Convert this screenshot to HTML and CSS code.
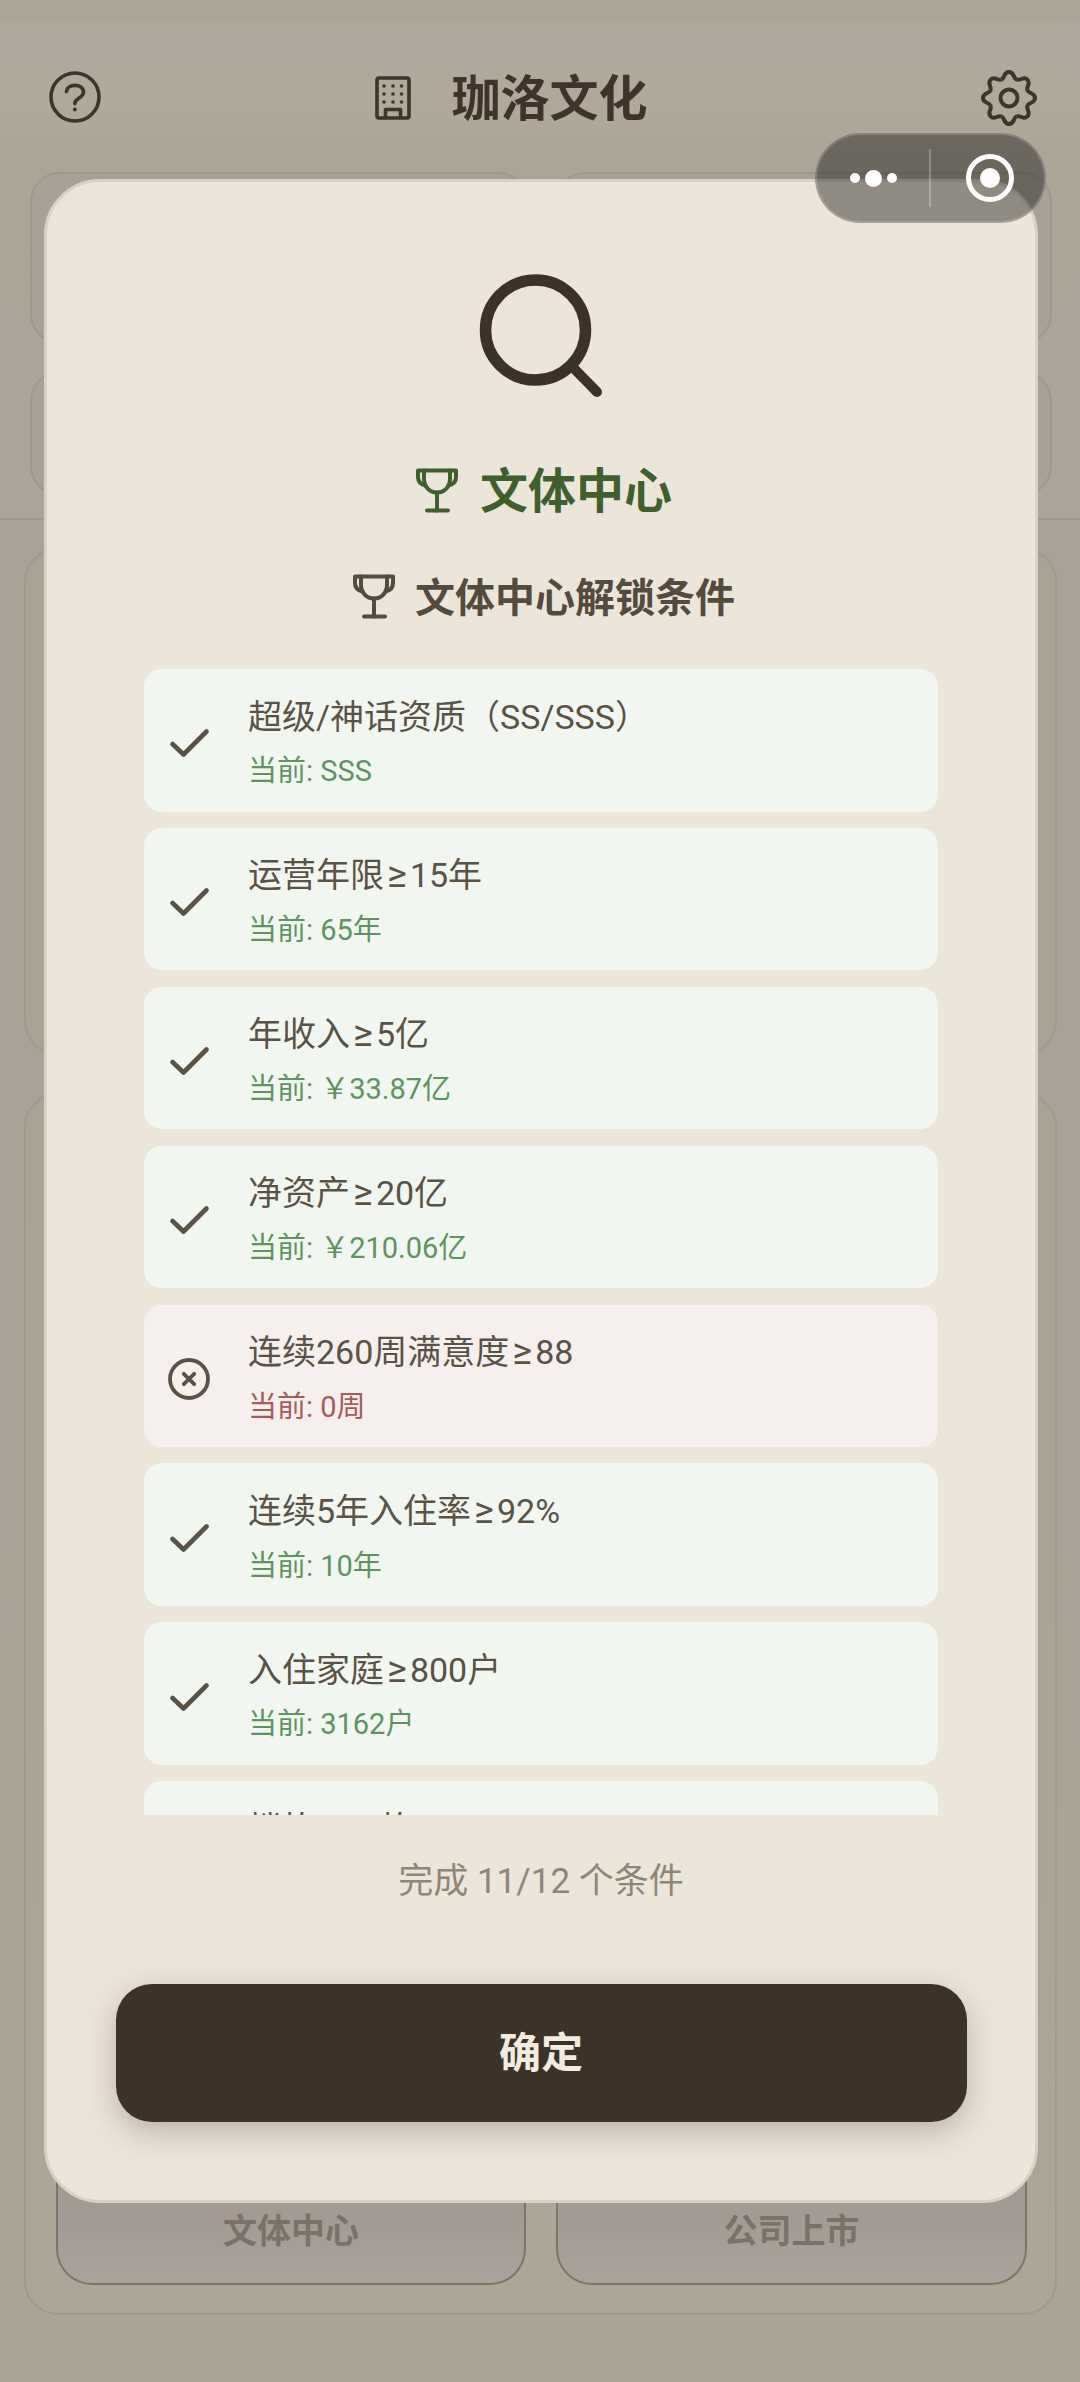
FILE: index.html
```html
<!DOCTYPE html>
<html lang="zh-CN">
<head>
<meta charset="utf-8">
<title>珈洛文化</title>
<link rel="stylesheet" href="styles.css">
</head>
<body>
<svg class="defs" width="0" height="0" aria-hidden="true">
  <defs>
    <g id="trophy" fill="none" stroke="currentColor" stroke-width="4" stroke-linecap="round" stroke-linejoin="round">
      <path d="M8 2.5H34V11C34 18.5 28.5 24.5 21 24.5S8 18.5 8 11Z"/>
      <path d="M8 2.5H2V9C2 13.5 5 16.5 9.5 17.5"/>
      <path d="M34 2.5H40V9C40 13.5 37 16.5 32.5 17.5"/>
      <path d="M21 24.5V42.5"/>
      <path d="M11 42.5H32"/>
    </g>
    <path id="check" d="M8.5 29L19.5 39.5L42.5 16.5" fill="none" stroke="#5b5246" stroke-width="4.6" stroke-linecap="round" stroke-linejoin="round"/>
    <path id="tooth" d="M-7.65 -18.48C-3.8 -20 -5.5 -26 0 -26S3.8 -20 7.65 -18.48"/>
  </defs>
</svg>

<div class="page">
  <div class="status-strip"></div>
  <div class="top-block">
    <header class="app-header">
      <svg class="ico-help" width="52" height="52" viewBox="0 0 52 52" fill="none" stroke="#3e342a" stroke-width="3.6" stroke-linecap="round">
        <circle cx="26" cy="26" r="24"/>
        <path d="M17.5 20.5C18 12.5 34 12 34.5 21C34.5 27 26.2 27 25.8 32.5"/>
        <circle cx="25.8" cy="38.5" r="2" fill="#3e342a" stroke="none"/>
      </svg>
      <div class="brand">
        <svg class="ico-building" width="36" height="44" viewBox="0 0 36 44" fill="none" stroke="#3e342a" stroke-width="3.6" stroke-linejoin="round">
          <rect x="2" y="2" width="32" height="40" rx="2"/>
          <path d="M10.5 42V33.5H25.5V42"/>
          <g fill="#3e342a" stroke="none">
            <circle cx="9" cy="10" r="1.8"/><circle cx="18" cy="10" r="1.8"/><circle cx="26.5" cy="10" r="1.8"/>
            <circle cx="9" cy="18" r="1.8"/><circle cx="18" cy="18" r="1.8"/><circle cx="26.5" cy="18" r="1.8"/>
            <circle cx="9" cy="26" r="1.8"/><circle cx="18" cy="26" r="1.8"/><circle cx="26.5" cy="26" r="1.8"/>
          </g>
        </svg>
        <h1 class="brand-name">珈洛文化</h1>
      </div>
      <svg class="ico-gear" width="60" height="60" viewBox="-30 -30 60 60" fill="none" stroke="#3e342a" stroke-width="4" stroke-linejoin="round">
        <use href="#tooth"/>
        <use href="#tooth" transform="rotate(45)"/>
        <use href="#tooth" transform="rotate(90)"/>
        <use href="#tooth" transform="rotate(135)"/>
        <use href="#tooth" transform="rotate(180)"/>
        <use href="#tooth" transform="rotate(225)"/>
        <use href="#tooth" transform="rotate(270)"/>
        <use href="#tooth" transform="rotate(315)"/>
        <circle r="8.5"/>
      </svg>
    </header>
    <div class="stat-grid">
      <div class="stat-card stat-tall"></div>
      <div class="stat-card stat-tall"></div>
      <div class="stat-card stat-short"></div>
      <div class="stat-card stat-short"></div>
    </div>
  </div>
  <section class="panel panel-one"></section>
  <section class="panel panel-two">
    <div class="action-grid">
      <div class="action-btn">文体中心</div>
      <div class="action-btn">公司上市</div>
    </div>
  </section>
</div>

<div class="capsule">
  <div class="capsule-dots"><i class="dot"></i><i class="dot dot-big"></i><i class="dot"></i></div>
  <i class="capsule-line"></i>
  <div class="capsule-ring"><i></i></div>
</div>

<main class="modal">
  <svg class="ico-search" width="130" height="130" viewBox="0 0 130 130" fill="none" stroke="#3c3228" stroke-linecap="round">
    <circle cx="59.5" cy="60" r="50" stroke-width="11.5"/>
    <path d="M96 96.5L121 122" stroke-width="10"/>
  </svg>
  <div class="modal-title">
    <svg class="ico-trophy" width="42" height="45" viewBox="0 0 42 45"><use href="#trophy"/></svg>
    <h2 class="modal-name">文体中心</h2>
  </div>
  <div class="modal-sub">
    <svg class="ico-trophy" width="42" height="45" viewBox="0 0 42 45"><use href="#trophy"/></svg>
    <h3 class="modal-subname">文体中心解锁条件</h3>
  </div>
  <div class="cond-list">
    <div class="cond cond-ok">
      <svg class="cond-ico" width="50" height="50" viewBox="0 0 50 50"><use href="#check"/></svg>
      <div class="cond-body"><div class="cond-title">超级/神话资质（SS/SSS）</div><div class="cond-now">当前: SSS</div></div>
    </div>
    <div class="cond cond-ok">
      <svg class="cond-ico" width="50" height="50" viewBox="0 0 50 50"><use href="#check"/></svg>
      <div class="cond-body"><div class="cond-title">运营年限<span class="ge">≥</span>15年</div><div class="cond-now">当前: 65年</div></div>
    </div>
    <div class="cond cond-ok">
      <svg class="cond-ico" width="50" height="50" viewBox="0 0 50 50"><use href="#check"/></svg>
      <div class="cond-body"><div class="cond-title">年收入<span class="ge">≥</span>5亿</div><div class="cond-now">当前: ￥33.87亿</div></div>
    </div>
    <div class="cond cond-ok">
      <svg class="cond-ico" width="50" height="50" viewBox="0 0 50 50"><use href="#check"/></svg>
      <div class="cond-body"><div class="cond-title">净资产<span class="ge">≥</span>20亿</div><div class="cond-now">当前: ￥210.06亿</div></div>
    </div>
    <div class="cond cond-bad">
      <svg class="cond-ico" width="50" height="50" viewBox="0 0 50 50" fill="none" stroke="#5b5246" stroke-width="3.8" stroke-linecap="round">
        <circle cx="25" cy="28" r="19"/>
        <path d="M19.8 22.8L30.2 33.2M30.2 22.8L19.8 33.2"/>
      </svg>
      <div class="cond-body"><div class="cond-title">连续260周满意度<span class="ge">≥</span>88</div><div class="cond-now">当前: 0周</div></div>
    </div>
    <div class="cond cond-ok">
      <svg class="cond-ico" width="50" height="50" viewBox="0 0 50 50"><use href="#check"/></svg>
      <div class="cond-body"><div class="cond-title">连续5年入住率<span class="ge">≥</span>92%</div><div class="cond-now">当前: 10年</div></div>
    </div>
    <div class="cond cond-ok">
      <svg class="cond-ico" width="50" height="50" viewBox="0 0 50 50"><use href="#check"/></svg>
      <div class="cond-body"><div class="cond-title">入住家庭<span class="ge">≥</span>800户</div><div class="cond-now">当前: 3162户</div></div>
    </div>
    <div class="cond cond-ok">
      <svg class="cond-ico" width="50" height="50" viewBox="0 0 50 50"><use href="#check"/></svg>
      <div class="cond-body"><div class="cond-title">楼栋<span class="ge">≥</span>30栋</div><div class="cond-now">当前: 42栋</div></div>
    </div>
  </div>
  <p class="cond-count">完成 11/12 个条件</p>
  <button class="confirm" type="button">确定</button>
</main>
</body>
</html>
```
FILE: styles.css
```css
* { box-sizing: border-box; }
html, body { margin: 0; padding: 0; }
body {
  position: relative;
  width: 1080px;
  height: 2382px;
  overflow: hidden;
  font-family: Roboto, "Noto Sans CJK SC", sans-serif;
  background: #aba497;
}
.defs { position: absolute; }

/* dimmed page behind the dialog */
.page {
  width: 1080px;
  height: 2382px;
  display: flex;
  flex-direction: column;
  background: linear-gradient(180deg, #a9a296 520px, #a9a296 1000px, #aba497 2300px, #aaa396 100%);
}
.status-strip { height: 23px; background: #aba497; }
.top-block {
  height: 497px;
  padding: 0 28px 0 30px;
  border-bottom: 2px solid #9f998c;
  background: linear-gradient(180deg, #b0a99d 0, #afa89b 90px, #aba497 140px, #aca69a 400px);
}
.app-header {
  height: 149px;
  display: flex;
  align-items: center;
  justify-content: space-between;
  padding: 0 0 0 19px;
  position: relative;
}
.ico-help { margin-top: -1px; }
.ico-gear { margin-right: 13px; }
.brand {
  display: flex;
  align-items: center;
  gap: 40px;
  margin-right: 57px;
}
.brand-name {
  margin: 4px 0 0;
  font-size: 49px;
  line-height: 60px;
  font-weight: 700;
  color: #3e342a;
}
.stat-grid {
  display: grid;
  grid-template-columns: 498px 497px;
  grid-template-rows: 172px 125px;
  gap: 27px 27px;
}
.stat-card {
  background: #a8a296;
  border: 2px solid #9e988b;
  border-radius: 30px;
}
.panel {
  margin: 28px 23px 0 24px;
  background: #a9a396;
  border: 2px solid #a09a8d;
  border-radius: 34px;
}
.panel-one { height: 507px; }
.panel-two {
  margin-top: 38px;
  height: 1222px;
  display: flex;
  flex-direction: column;
  justify-content: flex-end;
  padding: 0 28px 28px 30px;
  background: linear-gradient(180deg, #a9a396 0, #aca598 100%);
}
.action-grid {
  display: grid;
  grid-template-columns: 470px 471px;
  gap: 30px;
}
.action-btn {
  height: 106px;
  display: flex;
  align-items: center;
  justify-content: center;
  font-size: 34px;
  line-height: 50px;
  font-weight: 700;
  color: #7a7268;
  background: linear-gradient(180deg, #a39b93 0, #a39b93 40%, #a8a39b 100%);
  border: 2px solid #7b7568;
  border-top: 0;
  border-radius: 0 0 36px 36px;
}

/* mini-program capsule */
.capsule {
  position: absolute;
  z-index: 3;
  left: 815px;
  top: 133px;
  width: 231px;
  height: 90px;
  display: flex;
  align-items: center;
  background: rgba(30, 28, 25, 0.45);
  border: 2px solid rgba(255, 255, 255, 0.18);
  border-radius: 45px;
}
.capsule-dots {
  width: 112px;
  display: flex;
  align-items: center;
  justify-content: center;
  gap: 5px;
}
.dot { width: 10px; height: 10px; border-radius: 50%; background: #fff; }
.dot-big { width: 17px; height: 17px; }
.capsule-line { width: 2px; height: 58px; background: rgba(255, 255, 255, 0.25); }
.capsule-ring {
  width: 48px;
  height: 48px;
  margin-left: 35px;
  border: 5px solid #fff;
  border-radius: 50%;
  display: flex;
  align-items: center;
  justify-content: center;
}
.capsule-ring i { width: 20px; height: 20px; border-radius: 50%; background: #fff; }

/* dialog */
.modal {
  position: absolute;
  z-index: 2;
  left: 44px;
  top: 179px;
  width: 994px;
  height: 2024px;
  display: flex;
  flex-direction: column;
  align-items: center;
  padding-top: 88px;
  background: #ece5d9;
  border: 3px solid #d8d2c4;
  border-radius: 56px;
}
.ico-search { flex: none; }
.modal-title {
  display: flex;
  align-items: center;
  gap: 22px;
  margin: 70px 0 0 6px;
  height: 44px;
  color: #3f5f2d;
}
.modal-title .ico-trophy { margin-top: -4px; }
.modal-name {
  margin: 0;
  font-size: 48px;
  line-height: 60px;
  font-weight: 700;
}
.modal-sub {
  display: flex;
  align-items: center;
  gap: 20px;
  margin: 63px 0 0 6px;
  height: 44px;
  color: #544a3e;
}
.modal-sub .ico-trophy { margin-top: -6px; }
.modal-subname {
  margin: 0;
  font-size: 40px;
  line-height: 52px;
  font-weight: 700;
}
.cond-list {
  flex: none;
  width: 794px;
  height: 1146px;
  margin-top: 48px;
  overflow: hidden;
  display: flex;
  flex-direction: column;
  gap: 16.3px;
}
.cond {
  flex: none;
  display: flex;
  align-items: center;
  gap: 34px;
  height: 142.6px;
  padding-left: 20px;
  border-radius: 18px;
}
.cond-ok { background: #f1f7f0; }
.cond-bad { background: #f5efee; }
.cond-title {
  font-size: 34px;
  line-height: 48px;
  color: #5b5246;
}
.ge {
  font-size: 38px;
  line-height: 0;
  padding: 0 3px;
}
.cond-now {
  margin-top: 8.5px;
  font-size: 29px;
  line-height: 44px;
}
.cond-ok .cond-now { color: #5f9460; }
.cond-bad .cond-now { color: #a85a5a; }
.cond-body { margin-top: 5px; }
.cond-ico { flex: none; }
.cond-count {
  margin: 43px 0 0;
  font-size: 35px;
  line-height: 48px;
  color: #8f8678;
}
.confirm {
  flex: none;
  width: 851px;
  height: 138px;
  margin-top: 78px;
  padding: 0 0 7px;
  border: 0;
  border-radius: 36px;
  font-family: inherit;
  font-size: 42px;
  font-weight: 700;
  color: #f2ebdf;
  background: #3c3228;
  box-shadow: 0 10px 30px rgba(60, 50, 40, 0.28);
}
```
